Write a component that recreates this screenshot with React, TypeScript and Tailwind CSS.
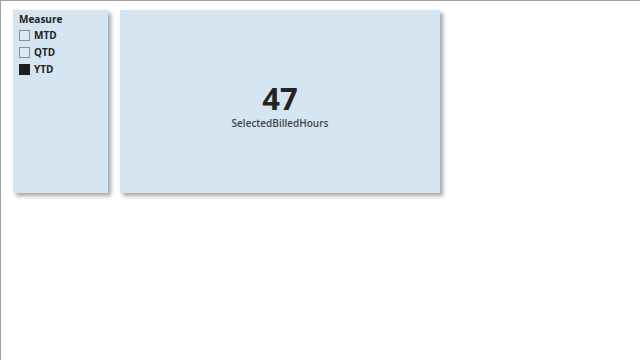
export default function App() {
  const items = [
    { label: "MTD", checked: false },
    { label: "QTD", checked: false },
    { label: "YTD", checked: true },
  ];

  return (
    <div
      className="w-[640px] h-[360px] bg-white border-t border-l border-[#a0a0a0] overflow-hidden"
      style={{ fontFamily: '"Open Sans", "Noto Sans", sans-serif' }}
    >
      <div className="flex gap-[12px] pl-[12px] pt-[9px]">
        <div className="w-[95px] h-[183px] bg-[#d6e5f2] shadow-[3px_3px_4px_rgba(0,0,0,0.35)] pl-[6px] pr-[5px] pt-[2px]">
          <div className="text-[10px] font-bold text-[#222] leading-[14px]">Measure</div>
          <div className="flex flex-col gap-[5px] mt-[3px]">
            {items.map((it) => (
              <div key={it.label} className="flex items-center gap-[4px] h-[12px]">
                <span
                  className={
                    it.checked
                      ? "w-[11px] h-[11px] bg-[#1e1e1e] border border-[#1e1e1e]"
                      : "w-[11px] h-[11px] bg-[#dfe9f3] border border-[#8a8f96]"
                  }
                />
                <span className="text-[10px] font-bold text-[#222]">{it.label}</span>
              </div>
            ))}
          </div>
        </div>
        <div className="w-[320px] h-[183px] bg-[#d6e5f2] shadow-[3px_3px_4px_rgba(0,0,0,0.35)] flex flex-col items-center justify-center pt-[8px]">
          <div className="text-[31px] font-bold text-[#252423] leading-[34px]">47</div>
          <div className="text-[10px] font-semibold text-[#444] leading-[14px] mt-[1px]">SelectedBilledHours</div>
        </div>
      </div>
    </div>
  );
}
